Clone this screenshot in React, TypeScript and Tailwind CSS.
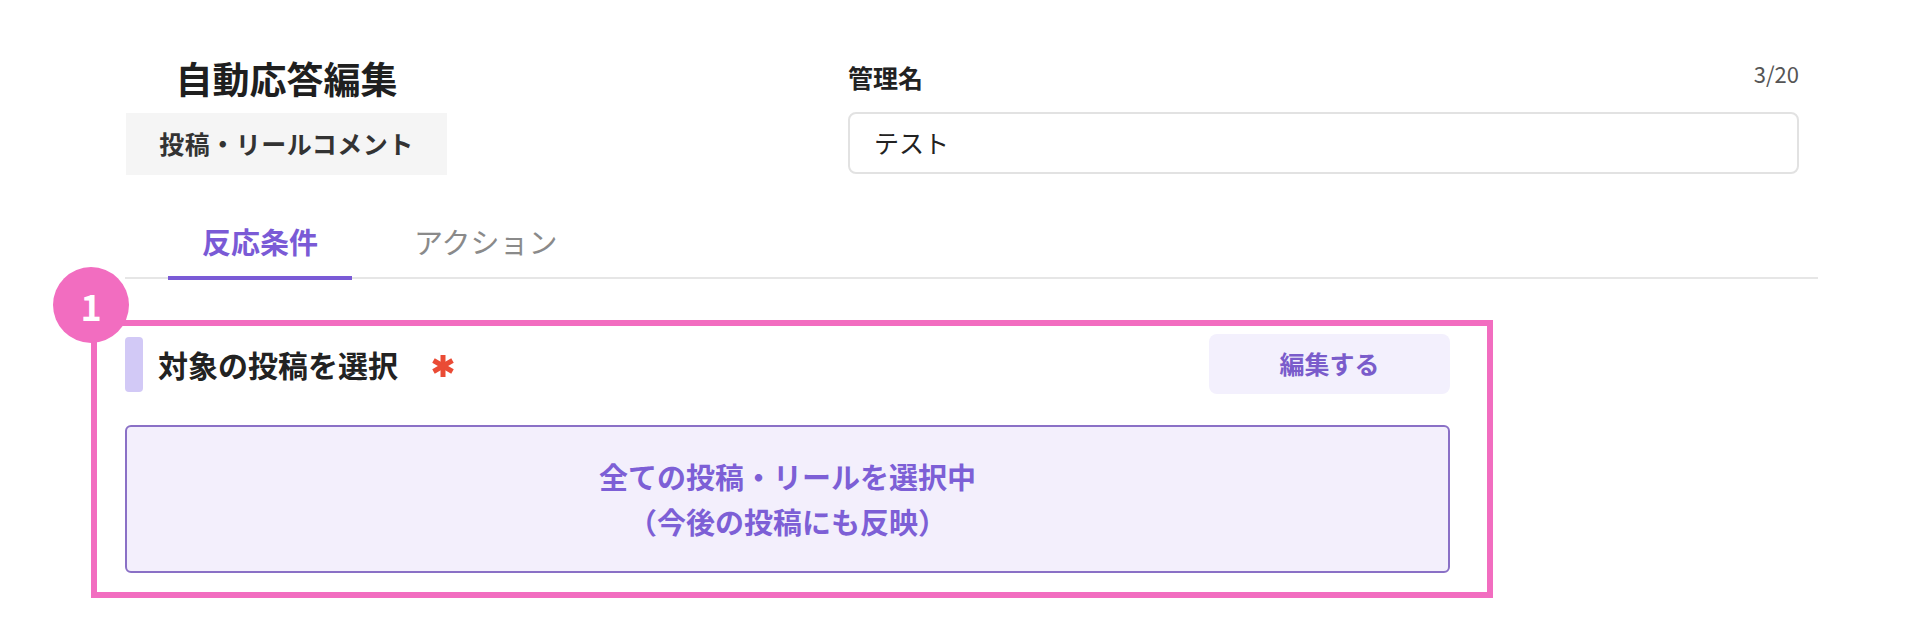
import React from "react";

// ── Small pieces ──────────────────────────────────────────────────────────────

function RequiredMark() {
  return (
    <svg width="24" height="24" viewBox="0 0 24 24" className="shrink-0">
      <g stroke="#ea4b35" strokeWidth="5">
        <line x1="12" y1="1" x2="12" y2="23" />
        <line x1="2.5" y1="6.5" x2="21.5" y2="17.5" />
        <line x1="2.5" y1="17.5" x2="21.5" y2="6.5" />
      </g>
    </svg>
  );
}

function Tab({ label, active }: { label: string; active?: boolean }) {
  return (
    <button
      className={
        active
          ? "px-[34px] pb-[15px] leading-[40px] text-[29px] font-bold text-[#7a5ad6] border-b-4 border-[#7a5ad6] -mb-[3px]"
          : "px-[34px] pb-[15px] leading-[40px] text-[29px] font-normal text-[#8a8a8a] border-b-4 border-transparent -mb-[3px]"
      }
    >
      {label}
    </button>
  );
}

// ── Main ──────────────────────────────────────────────────────────────────────

export default function App() {
  return (
    <div className="w-[1920px] h-[640px] bg-white pt-[58px] font-[family-name:'Noto_Sans_CJK_JP','Noto_Sans',sans-serif] text-[#222]">
      {/* Header */}
      <div className="flex items-start">
        <div className="ml-[126px] w-[321px] flex flex-col items-center">
          <h1 className="leading-[40px] text-[37px] font-bold text-[#1f1f1f]">
            自動応答編集
          </h1>
          <div className="mt-[15px] w-full h-[62px] bg-[#f5f5f5] flex items-center justify-center text-[25px] tracking-[0.5px] font-bold text-[#333]">
            投稿・リールコメント
          </div>
        </div>

        <div className="ml-[401px] w-[951px]">
          <div className="h-[40px] flex items-center justify-between">
            <span className="text-[25px] font-bold text-[#222]">管理名</span>
            <span className="text-[22px] text-[#555] -mt-[10px]">3/20</span>
          </div>
          <div className="mt-[14px] h-[62px] rounded-[8px] border-2 border-[#e2e2e2] flex items-center px-[24px] text-[25px] text-[#222]">
            テスト
          </div>
        </div>
      </div>

      {/* Tabs */}
      <div className="mt-[46px] ml-[125px] w-[1693px] border-b-2 border-[#e6e6e6] flex gap-[28px] pl-[43px]">
        <Tab label="反応条件" active />
        <Tab label="アクション" />
      </div>

      {/* Highlighted section */}
      <div className="relative mt-[41px] ml-[91px] w-[1402px] border-[6px] border-[#f26dc0] pl-[28px] pr-[37px] pt-[8px] pb-[19px]">
        <div className="absolute -left-[44px] -top-[59px] w-[76px] h-[76px] rounded-full bg-[#f26dc0] flex items-center justify-center text-white text-[36px] font-bold">
          1
        </div>

        <div className="h-[60px] flex items-center justify-between">
          <div className="flex items-center">
            <div className="w-[18px] h-[55px] rounded-[4px] bg-[#d2c9f6]" />
            <span className="ml-[15px] text-[30px] font-bold text-[#222]">
              対象の投稿を選択
            </span>
            <span className="ml-[33px] mt-[4px] flex">
              <RequiredMark />
            </span>
          </div>
          <button className="w-[241px] h-[60px] rounded-[8px] bg-[#f3f0fd] text-[25px] font-bold text-[#7a5ccb]">
            編集する
          </button>
        </div>

        <div className="mt-[31px] h-[148px] rounded-[6px] border-2 border-[#8a70c6] bg-[#f3effc] flex flex-col items-center justify-center text-[29px] leading-[45px] font-bold text-[#7d5fd6]">
          <span>全ての投稿・リールを選択中</span>
          <span>（今後の投稿にも反映）</span>
        </div>
      </div>
    </div>
  );
}
